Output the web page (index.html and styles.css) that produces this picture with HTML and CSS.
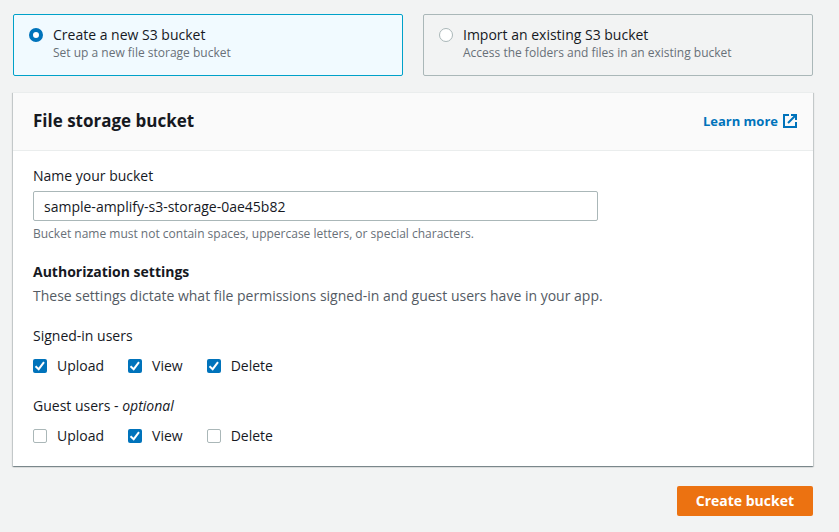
FILE: index.html
```html
<!DOCTYPE html>
<html lang="en">
<head>
<meta charset="utf-8">
<meta name="viewport" content="width=device-width, initial-scale=1">
<title>File storage</title>
<link rel="stylesheet" href="styles.css">
</head>
<body>
<form class="page">
  <div class="tiles" role="radiogroup" aria-label="Bucket source">
    <label class="tile">
      <input class="radio" type="radio" name="source" checked>
      <span class="tile-text">
        <span class="tile-title">Create a new S3 bucket</span>
        <span class="small">Set up a new file storage bucket</span>
      </span>
    </label>
    <label class="tile">
      <input class="radio" type="radio" name="source">
      <span class="tile-text">
        <span class="tile-title">Import an existing S3 bucket</span>
        <span class="small">Access the folders and files in an existing bucket</span>
      </span>
    </label>
  </div>

  <section class="panel">
    <header class="panel-header">
      <h2 class="panel-title">File storage bucket</h2>
      <a class="learn-more" href="#">Learn more
        <svg class="external" viewBox="0 0 14 14" fill="none" stroke="currentColor" stroke-width="2" aria-hidden="true">
          <path d="M6 1H1v12h12V8"/>
          <path d="M8 1h5v5M13 1L5 9"/>
        </svg>
      </a>
    </header>
    <div class="panel-body">
      <div class="field">
        <label for="bucket-name">Name your bucket</label>
        <input class="text-input" id="bucket-name" type="text" value="sample-amplify-s3-storage-0ae45b82" spellcheck="false">
        <p class="small">Bucket name must not contain spaces, uppercase letters, or special characters.</p>
      </div>
      <div class="intro">
        <h3 class="subheading">Authorization settings</h3>
        <p class="description">These settings dictate what file permissions signed-in and guest users have in your app.</p>
      </div>
      <fieldset class="group">
        <legend>Signed-in users</legend>
        <div class="options">
          <label class="option"><input class="checkbox" type="checkbox" checked>Upload</label>
          <label class="option"><input class="checkbox" type="checkbox" checked>View</label>
          <label class="option"><input class="checkbox" type="checkbox" checked>Delete</label>
        </div>
      </fieldset>
      <fieldset class="group">
        <legend>Guest users - <em>optional</em></legend>
        <div class="options">
          <label class="option"><input class="checkbox" type="checkbox">Upload</label>
          <label class="option"><input class="checkbox" type="checkbox" checked>View</label>
          <label class="option"><input class="checkbox" type="checkbox">Delete</label>
        </div>
      </fieldset>
    </div>
  </section>

  <div class="actions">
    <button class="primary" type="button">Create bucket</button>
  </div>
</form>
</body>
</html>
```

FILE: styles.css
```css
* {
  box-sizing: border-box;
}

body {
  margin: 0;
  background: #f2f3f3;
  color: #16191f;
  font-family: "Open Sans", "Noto Sans", sans-serif;
  font-size: 14px;
  line-height: 20px;
}

h2, h3, p {
  margin: 0;
}

.page {
  display: flex;
  flex-direction: column;
  padding: 14px 26px 16px 13px;
}

.tiles {
  display: grid;
  grid-template-columns: 1fr 1fr;
  gap: 20px;
  margin-bottom: 16px;
}

.tile {
  display: flex;
  gap: 10px;
  padding: 10px 15px 14px;
  border: 1px solid #aab7b8;
  border-radius: 2px;
}

.tile:has(:checked) {
  border-color: #00a1c9;
  background: #f1faff;
}

.tile-text {
  display: flex;
  flex-direction: column;
}

.small {
  color: #687078;
  font-size: 12px;
  line-height: 16px;
}

.radio,
.checkbox {
  appearance: none;
  flex: none;
  width: 14px;
  height: 14px;
  margin: 0;
  border: 1px solid #aab7b8;
  background: #fff;
}

.radio {
  margin-top: 3px;
  border-radius: 50%;
}

.radio:checked {
  border: 4px solid #0073bb;
}

.checkbox {
  border-radius: 2px;
}

.checkbox:checked {
  border: 0;
  background: #0073bb url("data:image/svg+xml,%3Csvg xmlns='http://www.w3.org/2000/svg' viewBox='0 0 14 14'%3E%3Cpath d='M2.5 7.2l3.2 3 5.3-7' fill='none' stroke='white' stroke-width='2'/%3E%3C/svg%3E") center / 14px 14px no-repeat;
}

.panel {
  background: #fff;
  border-top: 1px solid #eaeded;
  box-shadow: 0 1px 1px 0 rgba(0, 28, 36, 0.3), 1px 1px 1px 0 rgba(0, 28, 36, 0.15), -1px 1px 1px 0 rgba(0, 28, 36, 0.15);
}

.panel-header {
  display: flex;
  align-items: center;
  justify-content: space-between;
  padding: 17px 16px 18px 20px;
  border-bottom: 1px solid #eaeded;
  background: #fafafa;
}

.panel-title {
  font-size: 17px;
  line-height: 22px;
}

.learn-more {
  display: flex;
  align-items: center;
  gap: 5px;
  color: #0073bb;
  font-size: 13px;
  font-weight: 700;
  text-decoration: none;
}

.external {
  width: 14px;
  height: 14px;
}

.panel-body {
  display: flex;
  flex-direction: column;
  gap: 20px;
  padding: 15px 20px 20px;
}

.field {
  display: flex;
  flex-direction: column;
  gap: 5px;
}

.text-input {
  width: calc(75% - 5px);
  height: 30px;
  padding: 4px 10px;
  border: 1px solid #aab7b8;
  border-radius: 2px;
  background: #fff;
  color: inherit;
  font: inherit;
}

.intro {
  display: flex;
  flex-direction: column;
  gap: 4px;
}

.subheading {
  font-size: 14px;
}

.description {
  color: #545b64;
}

.group {
  min-width: 0;
  margin: 0;
  padding: 0;
  border: 0;
}

.group legend {
  padding: 0;
  margin-bottom: 10px;
}

.options {
  display: flex;
  gap: 24px;
}

.option {
  display: flex;
  align-items: center;
  gap: 10px;
}

.actions {
  display: flex;
  justify-content: flex-end;
  margin-top: 20px;
}

.primary {
  padding: 5px 19px;
  border: 0;
  border-radius: 2px;
  background: #ec7211;
  color: #fff;
  font: inherit;
  font-weight: 700;
}
```
